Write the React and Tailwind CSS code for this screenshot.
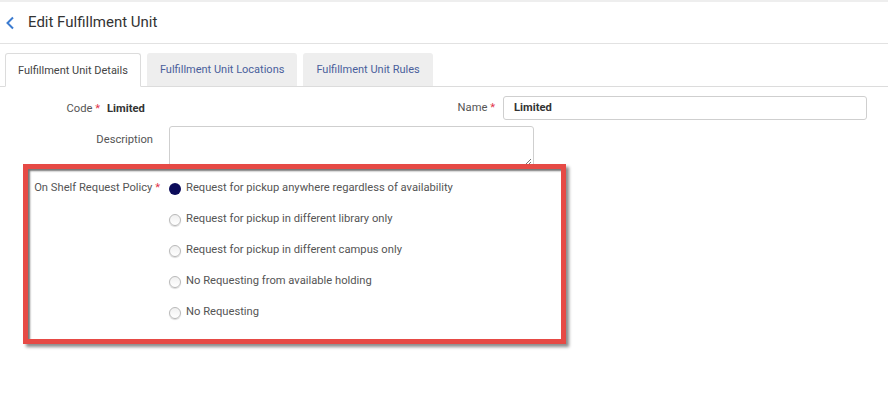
import React from "react";

const options = [
  "Request for pickup anywhere regardless of availability",
  "Request for pickup in different library only",
  "Request for pickup in different campus only",
  "No Requesting from available holding",
  "No Requesting",
];

function Radio({ checked }) {
  if (checked)
    return <span className="w-[12px] h-[12px] rounded-full bg-[#0c0c5a] shrink-0" />;
  return (
    <span className="w-[12px] h-[12px] rounded-full border border-[#b8b8b8] bg-gradient-to-b from-[#f0f0f0] to-[#ffffff] shadow-[0_1px_1px_rgba(0,0,0,0.15)] shrink-0" />
  );
}

export default function App() {
  return (
    <div className="w-[888px] h-[401px] bg-white font-['Roboto',_'Liberation_Sans',_sans-serif] border-t-2 border-[#eeeeee] overflow-hidden">
      <div className="h-[42px] flex items-center border-b border-[#e2e2e2]">
        <svg width="10" height="14" viewBox="0 0 10 14" className="ml-[5px]">
          <path d="M8 1.5 L2.5 7 L8 12.5" fill="none" stroke="#3b7bd0" strokeWidth="2" />
        </svg>
        <span className="ml-[13px] text-[15px] text-[#333]">Edit Fulfillment Unit</span>
      </div>
      <div className="pt-[9px] px-[5px] flex gap-[6px] border-b border-[#dcdcdc] text-[11px]">
        <div className="h-[34px] -mb-px pt-[2px] px-[12px] flex items-center border border-[#dcdcdc] border-b-white bg-white rounded-t-[3px] text-[#444]">
          Fulfillment Unit Details
        </div>
        <div className="h-[33px] pt-[2px] px-[13px] flex items-center bg-[#eeeeee] rounded-t-[3px] text-[#4a5f9c]">
          Fulfillment Unit Locations
        </div>
        <div className="h-[33px] pt-[2px] px-[13px] flex items-center bg-[#eeeeee] rounded-t-[3px] text-[#4a5f9c]">
          Fulfillment Unit Rules
        </div>
      </div>

      <div className="pt-[9px] text-[11.2px] text-[#555]">
        <div className="flex items-center h-[24px]">
          <div className="w-[430px] flex items-center pt-[2px]">
            <div className="w-[100px] text-right">
              Code <span className="text-[#e2334a]">*</span>
            </div>
            <div className="ml-[7px] font-bold text-[#333]">Limited</div>
          </div>
          <div className="w-[65px] text-right pt-[1px]">
            Name <span className="text-[#e2334a]">*</span>
          </div>
          <div className="ml-[8px] w-[364px] h-[24px] border border-[#cfcfcf] rounded-[3px] flex items-center px-[10px] font-bold text-[#333]">
            Limited
          </div>
        </div>

        <div className="flex mt-[6px]">
          <div className="w-[153px] text-right pt-[6px]">Description</div>
          <div className="relative ml-[16px] w-[365px] h-[42px] border border-[#cfcfcf] rounded-[3px]">
            <svg width="8" height="8" viewBox="0 0 8 8" className="absolute right-[1px] bottom-[1px]">
              <path d="M7 1 L1 7 M7 4 L4 7" stroke="#777" strokeWidth="1" />
            </svg>
          </div>
        </div>

        <div className="relative mt-[5px] flex">
          <div className="w-[160px] text-right h-[31px] flex items-center justify-end">
            <span>
              On Shelf Request Policy <span className="text-[#e2334a]">*</span>
            </span>
          </div>
          <div className="ml-[9px] flex flex-col">
            {options.map((o, i) => (
              <div key={o} className="h-[31px] flex items-center gap-[5px]">
                <Radio checked={i === 0} />
                <span>{o}</span>
              </div>
            ))}
          </div>
          <div className="absolute left-[23px] top-[-9px] w-[543px] h-[180px] border-[5px] border-[#e64a45] shadow-[3px_3px_3px_rgba(0,0,0,0.45),inset_2px_2px_2px_rgba(0,0,0,0.55)] pointer-events-none" />
        </div>
      </div>
    </div>
  );
}
